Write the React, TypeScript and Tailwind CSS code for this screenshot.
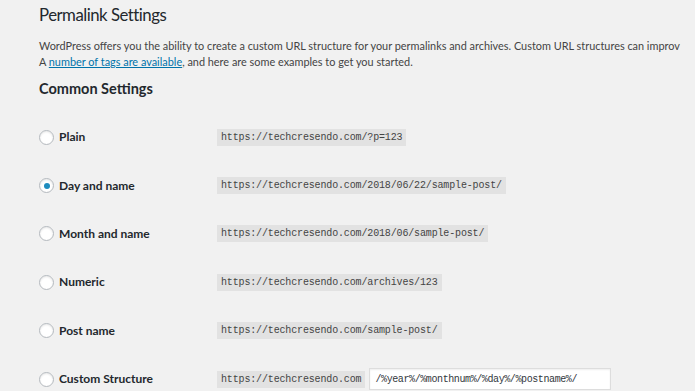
const rows = [
  { label: "Plain", url: "https://techcresendo.com/?p=123" },
  { label: "Day and name", url: "https://techcresendo.com/2018/06/22/sample-post/", checked: true },
  { label: "Month and name", url: "https://techcresendo.com/2018/06/sample-post/" },
  { label: "Numeric", url: "https://techcresendo.com/archives/123" },
  { label: "Post name", url: "https://techcresendo.com/sample-post/" },
];

function Radio({ checked }: { checked?: boolean }) {
  return (
    <span className="w-[15px] h-[15px] rounded-full border border-[#b4b9be] bg-white shadow-[inset_0_1px_2px_rgba(0,0,0,0.1)] flex items-center justify-center shrink-0">
      {checked && <span className="w-[6px] h-[6px] rounded-full bg-[#1e8cbe]" />}
    </span>
  );
}

function Code({ children }: { children: React.ReactNode }) {
  return (
    <span className="bg-[#e2e2e2] text-[#444] px-[4px] py-[2px] text-[10px] leading-[13px] tracking-[-0.15px] font-['Liberation_Mono',monospace] whitespace-nowrap">
      {children}
    </span>
  );
}

export default function App() {
  return (
    <div className="w-[695px] h-[391px] overflow-hidden bg-[#f1f1f1] pl-[39px] font-['Lato',sans-serif] text-[#444]">
      <h1 className="text-[16.8px] leading-[28px] pt-[1px] tracking-[-0.5px] text-[#23282d] whitespace-nowrap">Permalink Settings</h1>
      <div className="mt-[9px] text-[10.9px] leading-[16px] whitespace-nowrap">
        <p>WordPress offers you the ability to create a custom URL structure for your permalinks and archives. Custom URL structures can improv</p>
        <p>
          A <a className="text-[#0073aa] underline">number of tags are available</a>, and here are some examples to get you started.
        </p>
      </div>
      <h2 className="mt-[8px] text-[14.5px] leading-[22px] font-bold text-[#23282d]">Common Settings</h2>
      <div className="mt-[13px] flex flex-col">
        {rows.map((r) => (
          <div key={r.label} className="h-[48.4px] flex items-center">
            <div className="w-[178px] flex items-center gap-[5px]">
              <Radio checked={r.checked} />
              <span className="text-[12px] font-bold text-[#23282d]">{r.label}</span>
            </div>
            <Code>{r.url}</Code>
          </div>
        ))}
        <div className="h-[48.4px] flex items-center">
          <div className="w-[178px] flex items-center gap-[5px]">
            <Radio />
            <span className="text-[12px] font-bold text-[#23282d]">Custom Structure</span>
          </div>
          <Code>https://techcresendo.com</Code>
          <div className="ml-[4px] w-[242px] h-[22px] bg-white border border-[#ddd] shadow-[inset_0_1px_2px_rgba(0,0,0,0.07)] flex items-center px-[5px] text-[10px] tracking-[-0.4px] text-[#32373c] font-['Liberation_Mono',monospace] whitespace-nowrap">
            /%year%/%monthnum%/%day%/%postname%/
          </div>
        </div>
      </div>
    </div>
  );
}
